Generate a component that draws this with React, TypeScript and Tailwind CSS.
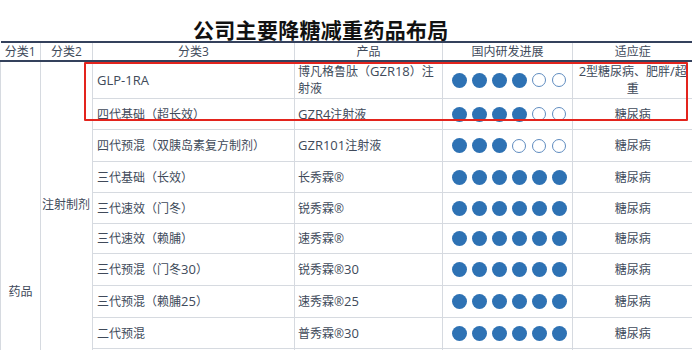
import React from 'react';

type Row = {
  name: string;
  product: string;
  done: number;
  indication: string;
  h: string;
};

const rows: Row[] = [
  {name: 'GLP-1RA', product: '博凡格鲁肽（GZR18）注\n射液', done: 4, indication: '2型糖尿病、肥胖/超\n重', h: 'h-[37px]'},
  {name: '四代基础（超长效）', product: 'GZR4注射液', done: 4, indication: '糖尿病', h: 'h-[31px]'},
  {name: '四代预混（双胰岛素复方制剂）', product: 'GZR101注射液', done: 3, indication: '糖尿病', h: 'h-[32px]'},
  {name: '三代基础（长效）', product: '长秀霖®', done: 6, indication: '糖尿病', h: 'h-[31px]'},
  {name: '三代速效（门冬）', product: '锐秀霖®', done: 6, indication: '糖尿病', h: 'h-[31px]'},
  {name: '三代速效（赖脯）', product: '速秀霖®', done: 6, indication: '糖尿病', h: 'h-[30px]'},
  {name: '三代预混（门冬30）', product: '锐秀霖®30', done: 6, indication: '糖尿病', h: 'h-[32px]'},
  {name: '三代预混（赖脯25）', product: '速秀霖®25', done: 6, indication: '糖尿病', h: 'h-[32px]'},
  {name: '二代预混', product: '普秀霖®30', done: 6, indication: '糖尿病', h: 'h-[31px]'},
  {name: '', product: '', done: 0, indication: '', h: 'h-[31px]'},
];

// latin runs sit a touch larger than the CJK glyphs in the source
function T({text}: {text: string}) {
  const lines = text.split('\n');
  return (
    <>
      {lines.map((line, li) => (
        <React.Fragment key={li}>
          {li > 0 && <br />}
          {line.split(/([A-Za-z0-9\-\/]+)/).map((part, pi) =>
            /^[A-Za-z0-9\-\/]+$/.test(part) ? (
              <span key={pi} className="text-[13px]">
                {part}
              </span>
            ) : (
              <React.Fragment key={pi}>{part}</React.Fragment>
            ),
          )}
        </React.Fragment>
      ))}
    </>
  );
}

function Dots({done}: {done: number}) {
  return (
    <div className="flex items-center justify-center gap-[5px] pl-[3px]">
      {[0, 1, 2, 3, 4, 5].map((i) =>
        i < done ? (
          <span key={i} className="w-[15px] h-[15px] rounded-full bg-[#2e72b4]" />
        ) : (
          <span key={i} className="w-[14px] h-[14px] mx-[0.5px] rounded-full border border-[#5f8cc0] bg-white" />
        ),
      )}
    </div>
  );
}

export default function App() {
  const cell = 'border border-[#d6dae0] text-[12px] leading-[17px] text-[#404a5a]';
  const head = 'border-x border-[#d6dae0] text-[12px] font-normal text-[#404a5a] text-center h-[17px] leading-[17px]';

  return (
    <div
      className="relative w-[692px] h-[350px] overflow-hidden bg-white"
      style={{fontFamily: "'Open Sans', 'Noto Sans CJK SC', sans-serif"}}
    >
      <div className="h-[41px] pl-[193px] pt-[17px]">
        <h1
          className="text-[21px] leading-[24px] font-bold text-[#111] tracking-[0.3px]"
          style={{fontFamily: "'Noto Sans CJK SC', sans-serif"}}
        >
          公司主要降糖减重药品布局
        </h1>
      </div>

      <table className="w-[692px] table-fixed border-collapse">
        <colgroup>
          <col className="w-[40px]" />
          <col className="w-[52px]" />
          <col className="w-[202px]" />
          <col className="w-[148px]" />
          <col className="w-[130px]" />
          <col className="w-[120px]" />
        </colgroup>
        <thead>
          <tr className="border-t-2 border-b-2 border-t-[#34415c] border-b-[#34415c]">
            <th className={`${head} border-l-0`}>分类1</th>
            <th className={head}>分类2</th>
            <th className={head}>分类3</th>
            <th className={head}>产品</th>
            <th className={head}>国内研发进展</th>
            <th className={`${head} border-r-0`}>适应症</th>
          </tr>
        </thead>
        <tbody>
          {rows.map((r, i) => (
            <tr key={i} className={r.h}>
              {i === 0 && (
                <>
                  <td rowSpan={rows.length} className={`${cell} align-top text-center pt-[221px]`}>
                    药品
                  </td>
                  <td rowSpan={rows.length} className={`${cell} align-top pt-[134px] pl-[1px] whitespace-nowrap`}>
                    注射制剂
                  </td>
                </>
              )}
              <td className={`${cell} pl-[4px] pt-[1px]`}>
                <T text={r.name} />
              </td>
              <td className={`${cell} pl-[3px] pt-[1px] whitespace-nowrap`}>
                <T text={r.product} />
              </td>
              <td className={`${cell} pt-[1px]`}>{r.done > 0 && <Dots done={r.done} />}</td>
              <td className={`${cell} border-r-0 text-center pt-[1px] whitespace-nowrap`}>
                <T text={r.indication} />
              </td>
            </tr>
          ))}
        </tbody>
      </table>

      <div className="absolute left-[84px] top-[62px] w-[604px] h-[59px] border-2 border-[#e3241d] rounded-[1px] pointer-events-none" />
    </div>
  );
}
